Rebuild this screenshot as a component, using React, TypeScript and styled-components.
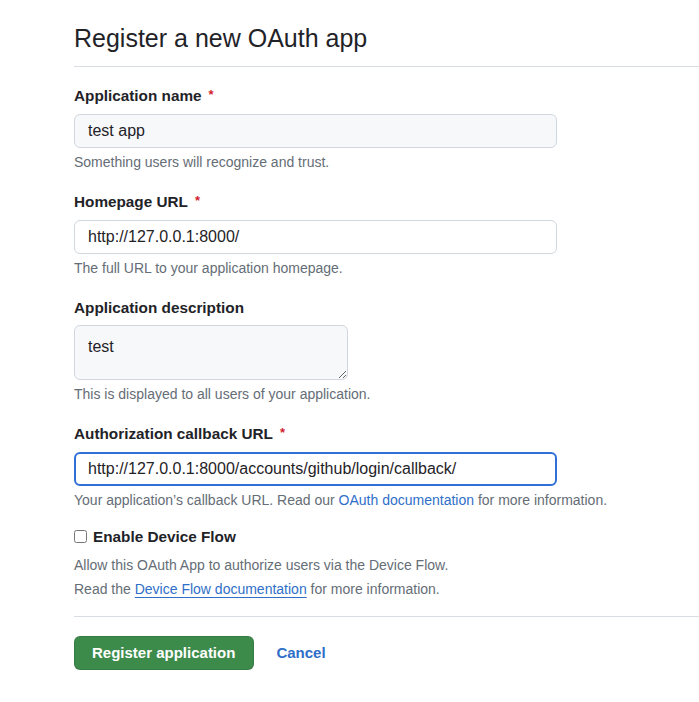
import React, { useEffect, useRef } from "react";
import styled, { createGlobalStyle } from "styled-components";

const GlobalStyle = createGlobalStyle`
  html, body {
    margin: 0;
    padding: 0;
    background: #ffffff;
  }
  body {
    font-family: "Liberation Sans", Arial, sans-serif;
    color: #1f2328;
  }
`;

const Page = styled.div`
  padding-left: 74px;
  padding-bottom: 30px;
`;

const Subhead = styled.div`
  padding-top: 20px;
  padding-bottom: 10px;
  border-bottom: 1px solid #d8dee4;
`;

const Title = styled.h1`
  margin: 0;
  font-size: 25px;
  font-weight: 400;
  line-height: 36px;
  color: #1f2328;
`;

const FormGroup = styled.div`
  margin-top: 17.5px;
  & + & {
    margin-top: 20px;
  }
`;

const Label = styled.label`
  display: block;
  font-size: 15.3px;
  font-weight: 700;
  line-height: 21px;
  margin-bottom: 7.5px;
  color: #1f2328;
`;

const Required = styled.span`
  color: #d1242f;
  font-size: 13px;
  margin-left: 7px;
  position: relative;
  top: -2px;
`;

const fieldTone = (tone?: string) => {
  if (tone === "focused") {
    return `
      background: #ffffff;
      border: 2px solid #2f6fd6;
      padding: 0 12px;
    `;
  } else if (tone === "filled") {
    return `
      background: #f6f8fa;
      border: 1px solid #d0d7de;
      padding: 0 13px;
    `;
  }
  return `
    background: #ffffff;
    border: 1px solid #d0d7de;
    padding: 0 13px;
  `;
};

const Input = styled.input<{ tone?: string }>`
  display: block;
  box-sizing: border-box;
  width: 483px;
  height: 34px;
  border-radius: 6px;
  font-family: "Liberation Sans", Arial, sans-serif;
  font-size: 16px;
  color: #1f2328;
  caret-color: #1f2328;
  outline: none;
  ${props => fieldTone(props.tone)}
`;

const TextArea = styled.textarea<{ tone?: string }>`
  display: block;
  box-sizing: border-box;
  width: 274px;
  height: 55px;
  border-radius: 6px;
  font-family: "Liberation Sans", Arial, sans-serif;
  font-size: 16px;
  line-height: 20px;
  color: #1f2328;
  outline: none;
  resize: vertical;
  ${props => fieldTone(props.tone)}
  padding-top: 11px;
`;

const Note = styled.p`
  margin: 4.5px 0 0;
  font-size: 14px;
  line-height: 18px;
  color: #656d76;
`;

const Link = styled.a<{ $underline?: boolean }>`
  color: #2f6fc8;
  text-decoration: ${props => (props.$underline ? "underline" : "none")};
  text-underline-offset: 3px;
`;

const CheckRow = styled.div`
  display: flex;
  align-items: center;
  margin-top: 17px;
  height: 21px;
`;

const Checkbox = styled.input`
  width: 13px;
  height: 13px;
  margin: 0 6px 0 0;
`;

const CheckLabel = styled.label`
  font-size: 15.3px;
  font-weight: 700;
  line-height: 21px;
  color: #1f2328;
`;

const CheckNotes = styled.div`
  margin-top: 6px;
`;

const CheckNote = styled.p`
  margin: 0;
  font-size: 14px;
  line-height: 24px;
  color: #656d76;
`;

const Actions = styled.div`
  display: flex;
  align-items: center;
  margin-top: 15px;
  padding-top: 19px;
  border-top: 1px solid #d8dee4;
`;

const PrimaryButton = styled.button`
  height: 34px;
  padding: 0 18px 0 17px;
  border: 1px solid rgba(31, 35, 40, 0.15);
  border-radius: 6px;
  background: #3d8b4b;
  color: #ffffff;
  font-family: "Liberation Sans", Arial, sans-serif;
  font-size: 15px;
  font-weight: 700;
  cursor: pointer;
`;

const CancelLink = styled.a`
  margin-left: 22px;
  color: #2f6fc8;
  font-size: 15px;
  font-weight: 700;
  text-decoration: none;
`;

type Field = {
  label: string;
  value: string;
  required?: boolean;
  multiline?: boolean;
  tone?: "filled" | "plain" | "focused";
  note: React.ReactNode;
};

const fields: Field[] = [
  {
    label: "Application name",
    value: "test app",
    required: true,
    tone: "filled",
    note: "Something users will recognize and trust.",
  },
  {
    label: "Homepage URL",
    value: "http://127.0.0.1:8000/",
    required: true,
    tone: "plain",
    note: "The full URL to your application homepage.",
  },
  {
    label: "Application description",
    value: "test",
    multiline: true,
    tone: "filled",
    note: "This is displayed to all users of your application.",
  },
  {
    label: "Authorization callback URL",
    value: "http://127.0.0.1:8000/accounts/github/login/callback/",
    required: true,
    tone: "focused",
    note: (
      <>
        Your application’s callback URL. Read our <Link href="#">OAuth documentation</Link> for
        more information.
      </>
    ),
  },
];

export default function App() {
  const focusedRef = useRef<HTMLInputElement>(null);

  // the callback field is the active one, caret at the end
  useEffect(() => {
    const el = focusedRef.current;
    if (el) {
      el.focus();
      el.setSelectionRange(el.value.length, el.value.length);
    }
  }, []);

  return (
    <>
      <GlobalStyle />
      <Page>
        <Subhead>
          <Title>Register a new OAuth app</Title>
        </Subhead>
        <form onSubmit={e => e.preventDefault()}>
          {fields.map(f => (
            <FormGroup key={f.label}>
              <Label>
                {f.label}
                {f.required && <Required>*</Required>}
              </Label>
              {f.multiline ? (
                <TextArea tone={f.tone} defaultValue={f.value} />
              ) : (
                <Input
                  tone={f.tone}
                  defaultValue={f.value}
                  ref={f.tone === "focused" ? focusedRef : undefined}
                />
              )}
              <Note>{f.note}</Note>
            </FormGroup>
          ))}

          <CheckRow>
            <Checkbox type="checkbox" id="device-flow" />
            <CheckLabel htmlFor="device-flow">Enable Device Flow</CheckLabel>
          </CheckRow>
          <CheckNotes>
            <CheckNote>Allow this OAuth App to authorize users via the Device Flow.</CheckNote>
            <CheckNote>
              Read the <Link href="#" $underline>Device Flow documentation</Link> for more
              information.
            </CheckNote>
          </CheckNotes>

          <Actions>
            <PrimaryButton type="submit">Register application</PrimaryButton>
            <CancelLink href="#">Cancel</CancelLink>
          </Actions>
        </form>
      </Page>
    </>
  );
}
